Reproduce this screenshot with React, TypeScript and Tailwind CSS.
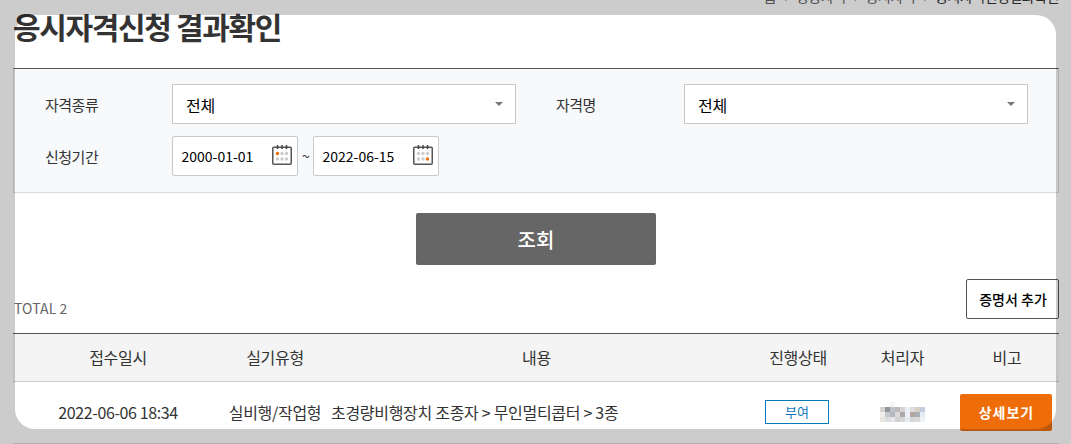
import React from 'react';

type CalendarProps = { active: number };

function CalendarIcon({ active }: CalendarProps) {
  const dots = [0, 1, 2, 3, 4, 5];
  return (
    <svg width="20" height="20" viewBox="0 0 20 20" fill="none" className="mb-0.5 shrink-0">
      <rect x="0.75" y="2.25" width="18.5" height="17" rx="1" stroke="#555" strokeWidth="1.5" />
      <path d="M5.5 0v4M10 0v4M14.5 0v4" stroke="#444" strokeWidth="1.5" />
      {dots.map((dot) => (
        <circle
          key={dot}
          cx={5.5 + (dot % 3) * 4.5}
          cy={dot < 3 ? 8.5 : 14}
          r="1.7"
          fill={dot === active ? '#ee6d09' : '#ccc'}
        />
      ))}
    </svg>
  );
}

function SelectBox() {
  return (
    <button className="flex h-10 w-[344px] items-center justify-between border border-[#c8cacc] bg-white pr-3 pl-[13px] text-base tracking-[-0.3px] text-black">
      <span className="pt-px">전체</span>
      <svg width="8" height="4" viewBox="0 0 8 4" fill="#777">
        <path d="M0 0h8L4 4z" />
      </svg>
    </button>
  );
}

function DateBox({ value, active }: { value: string; active: number }) {
  return (
    <div className="flex h-10 w-[126px] items-center justify-between rounded-xs border border-[#c8cacc] bg-white pr-[5px] pl-2 text-sm text-black">
      <span className="pl-[0.5px]">{value}</span>
      <CalendarIcon active={active} />
    </div>
  );
}

const mosaic = [
  ['#ffffff', '#ffffff', '#f2f4f6', '#ffffff', '#ffffff', '#ffffff', '#ffffff', '#ffffff', '#ffffff'],
  ['#d5d2cf', '#929395', '#bfc2c8', '#bfb9bb', '#d5d2d4', '#ebf0f5', '#dedcdf', '#d8cfc5', '#c5cddc'],
  ['#efeee9', '#c5c9cf', '#b4b8be', '#d9d7d9', '#a9aaa8', '#edf1f5', '#b6a69f', '#aab0b9', '#e5ebf3'],
  ['#e8e5e0', '#dcdddf', '#e4e5e8', '#d3d1ce', '#d7d7d8', '#e5e8ec', '#d5d8da', '#dcdbdc', '#f0f3f6'],
];

export default function App() {
  return (
    <div className="relative h-[444px] w-[1071px] overflow-hidden bg-white font-['Noto_Sans_CJK_KR',sans-serif] text-[#333]">
      <div className="ml-[13px] w-[1046px]">
        <div className="flex h-[68px] flex-col">
          <nav className="-mt-[14px] flex h-5 shrink-0 items-center justify-end text-sm tracking-[-0.5px] whitespace-nowrap text-[#666]">
            <span>홈</span>
            <span className="w-5 text-center">›</span>
            <span>항공자격</span>
            <span className="w-5 text-center">›</span>
            <span>응시자격</span>
            <span className="w-5 text-center">›</span>
            <span className="text-[#333]">응시자격신청결과확인</span>
          </nav>
          <h1 className="text-[30px] leading-10 font-bold tracking-[-1.35px]">응시자격신청 결과확인</h1>
        </div>

        <section className="flex h-[125px] flex-col gap-3 border border-t-[#555] border-r-[#d5dce2] border-b-[#d5dce2] border-l-[#d5dce2] bg-[#f7f9fb] pt-[15px] pl-[30px] text-base">
          <div className="flex items-center">
            <span className="w-32 pt-[3px] pl-px text-[15px] tracking-[-0.5px]">자격종류</span>
            <SelectBox />
            <span className="ml-10 w-32 pt-[3px] text-[15px] tracking-[-0.5px]">자격명</span>
            <SelectBox />
          </div>
          <div className="flex items-center">
            <span className="w-32 pt-[3px] pl-px text-[15px] tracking-[-0.5px]">신청기간</span>
            <DateBox value="2000-01-01" active={0} />
            <span className="w-[15px] pl-px text-center text-sm">~</span>
            <DateBox value="2022-06-15" active={5} />
          </div>
        </section>

        <div className="flex h-[86px] justify-center pt-5">
          <button className="h-[52px] w-60 rounded-xs bg-[#666] pt-0.5 text-xl font-medium text-white">조회</button>
        </div>

        <div className="flex h-[54px] justify-between">
          <span className="pt-[19px] pl-px text-sm tracking-[0.1px] text-[#666]">TOTAL 2</span>
          <button className="h-10 w-[93px] rounded-xs border border-[#555] bg-white pl-px text-sm font-medium text-black">
            증명서 추가
          </button>
        </div>

        <table className="w-full table-fixed border-t border-[#555] text-center text-base tracking-[-0.3px] whitespace-nowrap">
          <colgroup>
            <col className="w-[210px]" />
            <col className="w-[104px]" />
            <col className="w-[419px]" />
            <col className="w-[104px]" />
            <col className="w-[105px]" />
            <col className="w-[104px]" />
          </colgroup>
          <thead>
            <tr className="h-12 border-b border-[#ccc] bg-[#f4f4f4]">
              <th className="pb-0.5 font-normal">접수일시</th>
              <th className="pb-0.5 font-normal">실기유형</th>
              <th className="pb-0.5 font-normal">내용</th>
              <th className="pb-0.5 font-normal">진행상태</th>
              <th className="pb-0.5 font-normal">처리자</th>
              <th className="pb-0.5 font-normal">비고</th>
            </tr>
          </thead>
          <tbody>
            <tr className="h-[62px] border-b border-[#ddd]">
              <td className="pb-0.5 tracking-[-0.4px]">2022-06-06 18:34</td>
              <td className="pb-0.5">실비행/작업형</td>
              <td className="pb-0.5 pl-1 text-left">초경량비행장치 조종자 &gt; 무인멀티콥터 &gt; 3종</td>
              <td className="pr-0.5 pb-0.5">
                <span className="mx-auto flex h-6 w-16 items-center justify-center border border-[#0878b9] text-[13px] tracking-normal text-[#0878b9]">
                  부여
                </span>
              </td>
              <td className="pb-0.5">
                <div className="mx-auto grid w-[45px] grid-cols-9">
                  {mosaic.flat().map((color, index) => (
                    <span key={index} className="h-[5px] w-[5px]" style={{ backgroundColor: color }} />
                  ))}
                </div>
              </td>
              <td className="pr-0.5">
                <button className="h-[37px] w-[92px] rounded-xs bg-[#ee6d09] pb-0.5 pl-px text-sm font-bold tracking-[1px] text-white">
                  상세보기
                </button>
              </td>
            </tr>
          </tbody>
        </table>
      </div>

      {/* Dimmed frame around the highlighted area */}
      <div className="pointer-events-none absolute top-[15px] right-[15px] bottom-[15px] left-[15px] rounded-[20px] shadow-[0_0_0_40px_rgba(0,0,0,0.2)]" />
    </div>
  );
}
